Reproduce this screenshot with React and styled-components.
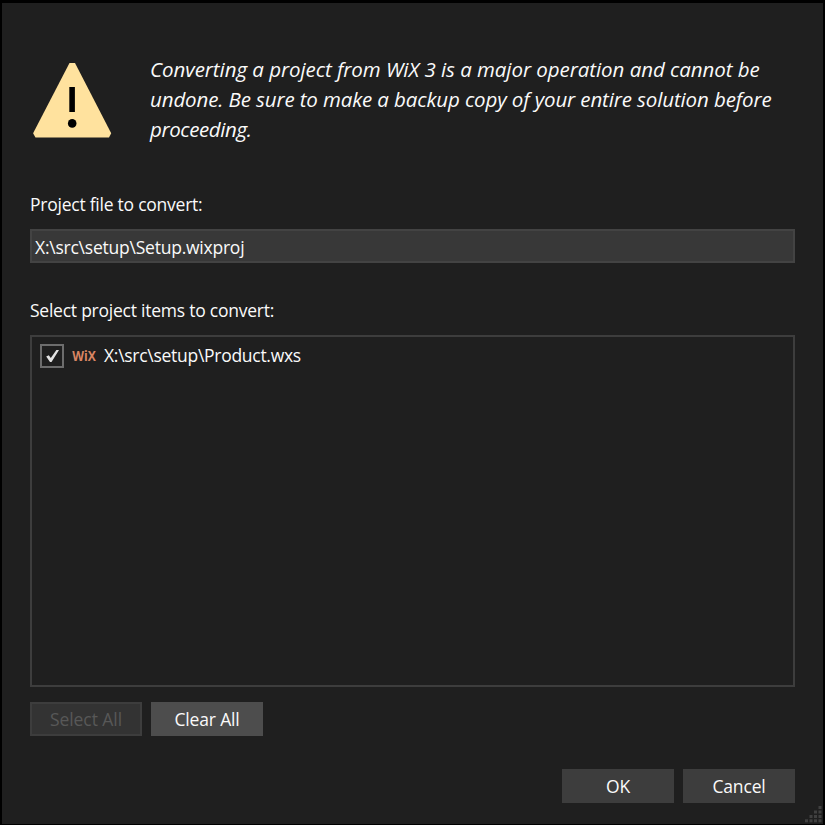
import React from "react";
import styled, { createGlobalStyle } from "styled-components";

const GlobalStyle = createGlobalStyle`
  *, *::before, *::after { box-sizing: border-box; }
  html, body { margin: 0; background: #000; }
`;

const Dialog = styled.main`
  position: relative;
  display: flex;
  flex-direction: column;
  width: 825px;
  height: 825px;
  padding: 51px 28px 0;
  border: 2px solid #000;
  border-top-width: 3px;
  border-bottom-width: 1px;
  background: #1f1f1f;
  color: #fafafa;
  font: 17.5px/24px "Open Sans", "Noto Sans", sans-serif;
  white-space: nowrap;
  overflow: hidden;
`;

const Header = styled.header`
  display: flex;
  flex: none;
  height: 138px;
`;

const WarningIcon = styled.svg`
  flex: none;
  width: 84px;
  height: 90px;
  margin-right: 36px;
`;

const Message = styled.p`
  margin: 0;
  font-size: 20.5px;
  line-height: 30px;
  font-style: italic;
`;

const Text = styled.span`
  display: block;
  letter-spacing: ${(p) => p.$tracking || 0}px;
`;

const Label = styled.label`
  display: block;
  flex: none;
  height: 24px;
  letter-spacing: -0.24px;
`;

const FileField = styled.div`
  flex: none;
  height: 34px;
  margin: 13px 0 35px;
  padding: 4px 3px;
  border: 2px solid #434343;
  background: #383838;
  letter-spacing: -0.23px;
`;

const ItemList = styled.ul`
  flex: none;
  height: 352px;
  margin: 13px 0 15px;
  padding: 7px 8px;
  border: 2px solid #3d3d3d;
  list-style: none;
`;

const Item = styled.li`
  display: flex;
  align-items: flex-start;
  gap: 8px;
  height: 24px;
  line-height: 22px;
`;

const CheckBox = styled.span`
  flex: none;
  width: 24px;
  height: 24px;
  border: 2px solid #6d6d6d;

  svg { display: block; }
`;

const Logo = styled.svg`
  flex: none;
  width: 24px;
  height: 24px;
  overflow: visible;
`;

const ButtonRow = styled.div`
  display: flex;
  flex: none;
  justify-content: ${(p) => (p.$end ? "flex-end" : "flex-start")};
  gap: 9px;
  margin-bottom: ${(p) => (p.$end ? 0 : 33)}px;
`;

const Button = styled.button`
  width: 112px;
  height: 34px;
  padding: 0 0 1px;
  border: 2px solid ${(p) => (p.$active ? "#4d4d4d" : "#3d3d3d")};
  background: ${(p) => (p.$active ? "#4d4d4d" : "#3d3d3d")};
  color: inherit;
  font: inherit;
  letter-spacing: -0.15px;

  &:disabled {
    border-color: #3d3d3d;
    background: #333;
    color: #585858;
    letter-spacing: -0.05px;
  }
`;

const ResizeGrip = styled.svg`
  position: absolute;
  right: 0;
  bottom: 0;
  width: 20px;
  height: 20px;
`;

const message = [
  { text: "Converting a project from WiX 3 is a major operation and cannot be", tracking: -0.05 },
  { text: "undone. Be sure to make a backup copy of your entire solution before", tracking: -0.12 },
  { text: "proceeding.", tracking: -0.4 },
];

const gripDots = [
  [14, 1],
  [9.5, 5.5], [14, 5.5],
  [5, 10], [9.5, 10], [14, 10],
  [0.5, 14.3], [5, 14.3], [9.5, 14.3], [14, 14.3],
];

export default function App() {
  return (
    <>
      <GlobalStyle />
      <Dialog>
        <Header>
          <WarningIcon viewBox="30 54 84 90">
            <path d="M69.5 63H75L111.2 133.2L109 137.5H35.5L33.1 133.2Z" fill="#ffe29e" />
            <path d="M69.3 87h5.6v25h-5.6z" fill="#000" />
            <circle cx="72.2" cy="123.4" r="4.3" fill="#000" />
          </WarningIcon>
          <Message>
            {message.map((line) => (
              <Text key={line.text} $tracking={line.tracking}>{line.text}</Text>
            ))}
          </Message>
        </Header>

        <Label>Project file to convert:</Label>
        <FileField>X:\src\setup\Setup.wixproj</FileField>

        <Label>Select project items to convert:</Label>
        <ItemList>
          <Item>
            <CheckBox role="checkbox" aria-checked="true">
              <svg width="20" height="20" viewBox="0 0 20 20">
                <path d="M4.2 10.5L6.8 9.2L8.8 12.1L14.4 4H17L9.5 16H8Z" fill="#e3e3e3" />
              </svg>
            </CheckBox>
            <Logo viewBox="0 0 24 24" fill="#d88563">
              <text x="0.2" y="17" fontSize="14" fontWeight="700" textLength="23.6" lengthAdjust="spacingAndGlyphs">WiX</text>
            </Logo>
            <Text $tracking={-0.28}>X:\src\setup\Product.wxs</Text>
          </Item>
        </ItemList>

        <ButtonRow>
          <Button disabled>Select All</Button>
          <Button $active>Clear All</Button>
        </ButtonRow>
        <ButtonRow $end>
          <Button>OK</Button>
          <Button>Cancel</Button>
        </ButtonRow>

        <ResizeGrip viewBox="0 0 20 20" fill="#404040">
          {gripDots.map(([x, y]) => (
            <rect key={`${x}-${y}`} x={x + 1.5} y={y + 1} width="3" height="3" />
          ))}
        </ResizeGrip>
      </Dialog>
    </>
  );
}
